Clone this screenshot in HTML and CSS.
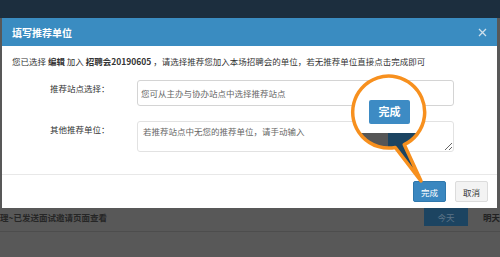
FILE: index.html
```html
<!DOCTYPE html>
<html>
<head>
    <title>填写推荐单位</title>
    <link rel="stylesheet" href="styles.css">
</head>
<body>
    <div class="topbar"></div>
    <div class="modal">
        <div class="modal-header">
            <h3>填写推荐单位</h3>
            <svg class="close" width="9" height="9" viewBox="0 0 9 9"><path d="M1 1L8 8M8 1L1 8" stroke="#cfe0ec" stroke-width="1.3"/></svg>
        </div>
        <div class="modal-body">
            <p class="intro">您已选择 <b>编辑</b> 加入 <b>招聘会20190605</b> ，请选择推荐您加入本场招聘会的单位，若无推荐单位直接点击完成即可</p>
            <div class="form-row">
                <label>推荐站点选择：</label>
                <input type="text" placeholder="您可从主办与协办站点中选择推荐站点">
            </div>
            <div class="form-row">
                <label>其他推荐单位：</label>
                <textarea placeholder="若推荐站点中无您的推荐单位，请手动输入"></textarea>
            </div>
        </div>
        <div class="modal-footer">
            <button class="btn btn-primary">完成</button>
            <button class="btn btn-default">取消</button>
        </div>
    </div>
    <div class="page-row">
        <span class="hint">理~已发送面试邀请页面查看</span>
        <span class="day today">今天</span>
        <span class="day">明天</span>
    </div>

    <!-- magnifier callout pointing at the footer button -->
    <svg class="callout" width="500" height="257" viewBox="0 0 500 257">
        <defs>
            <clipPath id="lens">
                <path d="M404.2 144.6 L421 181 L395.3 147.5 A36 36 0 1 1 404.2 144.6 Z"/>
            </clipPath>
        </defs>
        <g clip-path="url(#lens)">
            <rect x="340" y="70" width="100" height="120" fill="#fff"/>
            <rect x="340" y="133" width="48" height="60" fill="#565656"/>
            <rect x="388" y="133" width="60" height="60" fill="#1c4461"/>
            <rect x="369" y="100" width="41" height="24" rx="2" fill="#3d8bc4"/>
            <text x="389.5" y="116" text-anchor="middle" class="lens-text">完成</text>
        </g>
        <path d="M404.2 144.6 L421 181 L395.3 147.5 A36 36 0 1 1 404.2 144.6 Z" fill="none" stroke="#f7901e" stroke-width="3.5" stroke-linejoin="round"/>
    </svg>
</body>
</html>
```

FILE: styles.css
```css
body {
    margin: 0;
    width: 500px;
    height: 257px;
    overflow: hidden;
    position: relative;
    background-color: #585858;
    font-family: "Noto Sans CJK SC", sans-serif;
}
.topbar {
    height: 18px;
    background-color: #1c2e3e;
}
.modal {
    width: 495px;
    margin-left: 2px;
    background-color: white;
}
.modal-header {
    height: 28px;
    display: flex;
    align-items: center;
    justify-content: space-between;
    padding: 0 10px;
    background-color: #3a8cc1;
}
.modal-header h3 {
    margin: 0;
    font-size: 10px;
    font-weight: bold;
    color: white;
}
.modal-body {
    padding: 9px 0 22px 0;
}
.intro {
    margin: 0 0 13px 10px;
    font-size: 8.5px;
    line-height: 12px;
    color: #333;
}
.form-row {
    display: grid;
    grid-template-columns: 135px 317px;
}
.form-row + .form-row {
    margin-top: 15px;
}
.form-row label {
    padding: 2px 0 0 48px;
    font-size: 8.5px;
    line-height: 12px;
    color: #333;
}
.form-row input,
.form-row textarea {
    box-sizing: border-box;
    margin: 0;
    border: 1px solid #d4d4d4;
    border-radius: 3px;
    font-family: "Noto Sans CJK SC", sans-serif;
    font-size: 8.5px;
    color: #555;
}
.form-row input {
    height: 26px;
    padding: 0 3px;
}
.form-row textarea {
    height: 31px;
    padding: 3px 5px;
    border-color: #e2e2e2;
}
.form-row input::placeholder,
.form-row textarea::placeholder {
    color: #666;
}
.modal-footer {
    display: flex;
    justify-content: flex-end;
    gap: 9px;
    padding: 6px 9px 6px 0;
    border-top: 1px solid #e8e8e8;
}
.btn {
    height: 21px;
    width: 33px;
    padding: 0;
    border-radius: 2px;
    font-family: "Noto Sans CJK SC", sans-serif;
    font-size: 8.5px;
}
.btn-primary {
    background-color: #3a87c0;
    border: 1px solid #2f78ad;
    color: white;
}
.btn-default {
    background-color: #f3f3f3;
    border: 1px solid #dcdcdc;
    color: #333;
}
.page-row {
    display: flex;
    align-items: center;
    height: 18px;
    border-bottom: 1px solid #4d4d4d;
    padding-bottom: 5px;
    font-size: 8.5px;
}
.hint {
    margin-left: 0;
    color: #262626;
    font-weight: bold;
}
.day {
    margin-left: 15px;
    color: #222;
    font-weight: bold;
}
.today {
    margin-left: auto;
    width: 44px;
    height: 18px;
    line-height: 18px;
    text-align: center;
    background-color: #1c4461;
    color: #5d7487;
    font-weight: normal;
}
.callout {
    position: absolute;
    left: 0;
    top: 0;
    pointer-events: none;
}
.lens-text {
    font-size: 11px;
    font-weight: bold;
    fill: white;
}
```
